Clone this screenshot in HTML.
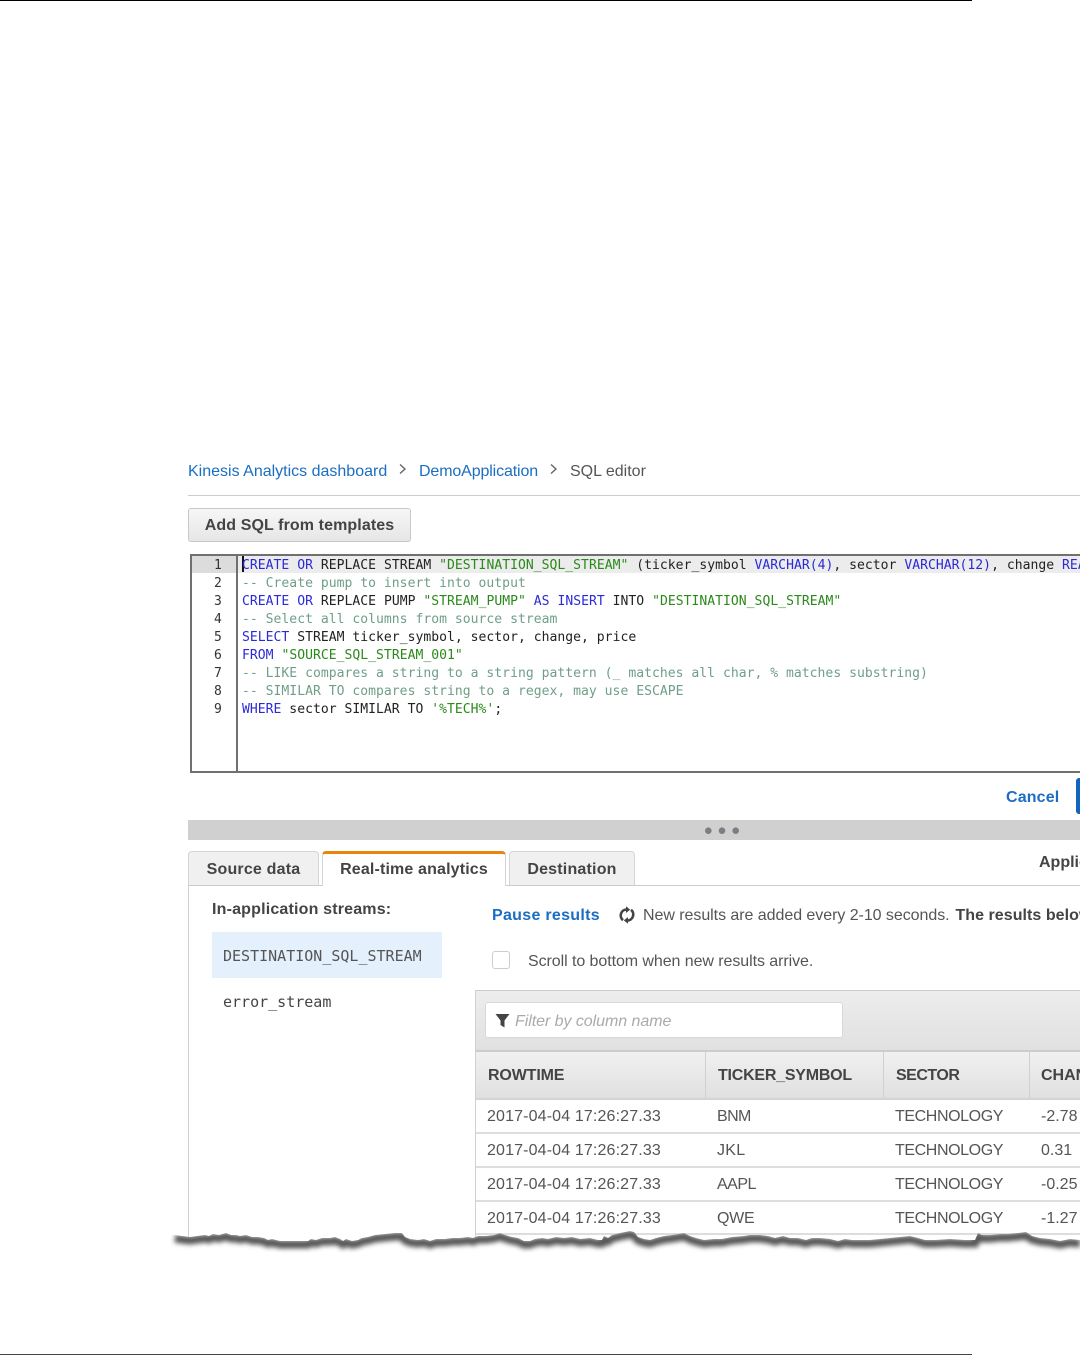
<!DOCTYPE html>
<html><head><meta charset="utf-8">
<style>
html,body{margin:0;padding:0;background:#fff;width:1080px;height:1355px;overflow:hidden}
#p{position:relative;width:1080px;height:1355px;overflow:hidden;font-family:"Liberation Sans",Arial,sans-serif;color:#444;filter:blur(.3px)}
#p div{position:absolute;white-space:pre}
.l{color:#1b6ec2}
.code{font-family:"DejaVu Sans Mono",monospace;font-size:13.07px;letter-spacing:.02px;line-height:18px;color:#222;left:242px}
.n{font-family:"DejaVu Sans Mono",monospace;font-size:13px;line-height:18px;color:#333;left:214px}
.k{color:#2a2ad8}.s{color:#2a8a1a}
.t{font-size:16px;line-height:20px;color:#555}
.h{font-size:16px;font-weight:bold;line-height:20px;color:#444}
.b{font-weight:bold}
.d{letter-spacing:.14px}.g{letter-spacing:-.4px}
.tab{top:851px;height:34px;background:#f0f0f0;border:1px solid #d5d5d5;border-bottom:none;border-radius:4px 4px 0 0;box-sizing:border-box;font-weight:bold;font-size:16px;line-height:36px;text-align:center;color:#444;letter-spacing:.2px}
.rl{left:476px;width:604px;height:2px;background:#ddd}
.vs{top:1051px;width:1px;height:47px;background:#d0d0d0}
</style></head><body><div id="p">

<div style="left:0;top:0;width:972px;height:1px;background:#000"></div>
<div style="left:0;top:1354px;width:972px;height:1px;background:#444"></div>

<div class="l" style="left:188px;top:464px;font-size:16px;line-height:16px">Kinesis Analytics dashboard</div>
<svg style="position:absolute;left:398px;top:463px" width="10" height="12"><path d="M2 1.5 L7 6 L2 10.5" fill="none" stroke="#666" stroke-width="1.4"/></svg>
<div class="l" style="left:419px;top:464px;font-size:16px;line-height:16px;letter-spacing:-.13px">DemoApplication</div>
<svg style="position:absolute;left:549px;top:463px" width="10" height="12"><path d="M2 1.5 L7 6 L2 10.5" fill="none" stroke="#666" stroke-width="1.4"/></svg>
<div style="left:570px;top:464px;font-size:16px;line-height:16px;color:#555">SQL editor</div>
<div style="left:188px;top:495px;width:892px;height:1px;background:#ccc"></div>

<div style="left:188px;top:508px;width:223px;height:34px;box-sizing:border-box;border:1px solid #c8c8c8;border-radius:3px;background:linear-gradient(#f6f6f6,#e6e6e6);font-weight:bold;font-size:16px;line-height:34px;text-align:center;color:#444;letter-spacing:.1px">Add SQL from templates</div>

<!-- editor -->
<div style="left:190px;top:554px;width:900px;height:219px;box-sizing:border-box;border:2px solid #707070;background:#fff"></div>
<div style="left:192px;top:556px;width:888px;height:17px;background:#ececec"></div>
<div style="left:192px;top:556px;width:45px;height:17px;background:#dcdcdc"></div>
<div style="left:236px;top:556px;width:2px;height:216px;background:#707070"></div>
<div style="left:242px;top:556px;width:2px;height:16px;background:#111"></div>

<div class="n" style="top:557px">1</div><div class="n" style="top:575px">2</div><div class="n" style="top:593px">3</div><div class="n" style="top:611px">4</div><div class="n" style="top:629px">5</div><div class="n" style="top:647px">6</div><div class="n" style="top:665px">7</div><div class="n" style="top:683px">8</div><div class="n" style="top:701px">9</div>

<div class="code" style="top:557px"><span class="k">CREATE</span> <span class="k">OR</span> REPLACE STREAM <span class="s">"DESTINATION_SQL_STREAM"</span> (ticker_symbol <span class="k">VARCHAR(4)</span>, sector <span class="k">VARCHAR(12)</span>, change <span class="k">REAL</span></div>
<div class="code" style="top:575px;color:#6f9f88">-- Create pump to insert into output</div>
<div class="code" style="top:593px"><span class="k">CREATE</span> <span class="k">OR</span> REPLACE PUMP <span class="s">"STREAM_PUMP"</span> <span class="k">AS</span> <span class="k">INSERT</span> INTO <span class="s">"DESTINATION_SQL_STREAM"</span></div>
<div class="code" style="top:611px;color:#6f9f88">-- Select all columns from source stream</div>
<div class="code" style="top:629px"><span class="k">SELECT</span> STREAM ticker_symbol, sector, change, price</div>
<div class="code" style="top:647px"><span class="k">FROM</span> <span class="s">"SOURCE_SQL_STREAM_001"</span></div>
<div class="code" style="top:665px;color:#6f9f88">-- LIKE compares a string to a string pattern (_ matches all char, % matches substring)</div>
<div class="code" style="top:683px;color:#6f9f88">-- SIMILAR TO compares string to a regex, may use ESCAPE</div>
<div class="code" style="top:701px"><span class="k">WHERE</span> sector SIMILAR TO <span class="s">'%TECH%'</span>;</div>

<div class="l b" style="left:1006px;top:786px;font-size:16px;line-height:20px;letter-spacing:.15px;padding-top:2px">Cancel</div>
<div style="left:1076px;top:778px;width:20px;height:36px;background:#1166bb;border-radius:3px"></div>

<div style="left:188px;top:820px;width:892px;height:20px;background:#d0d0d0"></div>
<svg style="position:absolute;left:700px;top:824px" width="44" height="14"><circle cx="8.3" cy="6.7" r="3.3" fill="#7b7e82"/><circle cx="22" cy="6.7" r="3.3" fill="#7b7e82"/><circle cx="35.7" cy="6.7" r="3.3" fill="#7b7e82"/></svg>

<!-- tabs -->
<div style="left:188px;top:885px;width:892px;height:1px;background:#ccc"></div>
<div style="left:188px;top:885px;width:1px;height:360px;background:#d0d0d0"></div>
<div class="tab" style="left:188px;width:131px">Source data</div>
<div class="tab" style="left:322px;width:184px;height:35px;background:#fff;border-top:3px solid #e8860c;line-height:31px;color:#444;letter-spacing:.15px">Real-time analytics</div>
<div class="tab" style="left:509px;width:126px">Destination</div>
<div class="h" style="left:1039px;top:853px">Application</div>

<div class="h" style="left:212px;top:900px;letter-spacing:.18px">In-application streams:</div>
<div style="left:212px;top:932px;width:230px;height:46px;background:#e4f0fc"></div>
<div style="left:223px;top:946px;font-family:'DejaVu Sans Mono',monospace;font-size:15px;line-height:20px;color:#555">DESTINATION_SQL_STREAM</div>
<div style="left:223px;top:992px;font-family:'DejaVu Sans Mono',monospace;font-size:15px;line-height:20px;color:#444">error_stream</div>

<div class="l b" style="left:492px;top:907px;font-size:16px;line-height:18px;letter-spacing:.3px">Pause results</div>
<svg style="position:absolute;left:618px;top:906px" width="18" height="18" viewBox="0 0 18 18"><path d="M8.5 3.5 A6 6 0 0 0 5 14.2" fill="none" stroke="#444" stroke-width="2.6"/><path d="M9.5 14.5 A6 6 0 0 0 13 3.8" fill="none" stroke="#444" stroke-width="2.6"/><path d="M8 0.3 L12.2 3.6 L8 7 Z M10 11 L5.8 14.4 L10 17.7 Z" fill="#444"/></svg>
<div class="t" style="left:643px;top:906px;letter-spacing:-.05px">New results are added every 2-10 seconds.<span class="b" style="color:#444;letter-spacing:.05px"> &#8202;The results below</span></div>

<div style="left:492px;top:951px;width:18px;height:18px;box-sizing:border-box;border:1px solid #ccc;border-radius:3px;background:#fff"></div>
<div class="t" style="left:528px;top:952px;letter-spacing:-.07px">Scroll to bottom when new results arrive.</div>

<!-- table -->
<div style="left:475px;top:990px;width:605px;height:61px;box-sizing:border-box;border-top:1px solid #ccc;border-left:1px solid #ccc;background:linear-gradient(#ededed,#e0e0e0)"></div>
<div style="left:485px;top:1002px;width:358px;height:36px;box-sizing:border-box;border:1px solid #d8d8d8;border-radius:3px;background:#fff"></div>
<svg style="position:absolute;left:495px;top:1013px" width="16" height="16" viewBox="0 0 16 16"><path d="M0.5 1 H14.5 L9.5 7.5 V14.5 L5.5 12 V7.5 Z" fill="#444"/></svg>
<div style="left:515px;top:1012px;font-size:16px;line-height:20px;font-style:italic;color:#aaa;letter-spacing:-.05px">Filter by column name</div>
<div style="left:475px;top:1050px;width:605px;height:2px;background:#ccc"></div>
<div style="left:475px;top:1052px;width:605px;height:46px;background:linear-gradient(#f0f0f0,#e0e0e0)"></div>
<div style="left:475px;top:1098px;width:605px;height:2px;background:#d4d4d4"></div>
<div style="left:475px;top:990px;width:1px;height:260px;background:#d0d0d0"></div>
<div class="vs" style="left:705px"></div><div class="vs" style="left:883px"></div><div class="vs" style="left:1029px"></div>
<div class="h" style="left:488px;top:1066px;letter-spacing:-.14px">ROWTIME</div>
<div class="h" style="left:718px;top:1066px;letter-spacing:-.23px">TICKER_SYMBOL</div>
<div class="h" style="left:896px;top:1066px;letter-spacing:-.5px">SECTOR</div>
<div class="h" style="left:1041px;top:1066px">CHANGE</div>

<div class="rl" style="top:1132px"></div><div class="rl" style="top:1166px"></div><div class="rl" style="top:1200px"></div><div class="rl" style="top:1233px"></div>

<div class="t d" style="left:487px;top:1107px">2017-04-04 17:26:27.33</div><div class="t" style="left:717px;top:1107px;letter-spacing:-.6px">BNM</div><div class="t g" style="left:895px;top:1107px">TECHNOLOGY</div><div class="t" style="left:1041px;top:1107px">-2.78</div>
<div class="t d" style="left:487px;top:1141px">2017-04-04 17:26:27.33</div><div class="t" style="left:717px;top:1141px;letter-spacing:.3px">JKL</div><div class="t g" style="left:895px;top:1141px">TECHNOLOGY</div><div class="t" style="left:1041px;top:1141px">0.31</div>
<div class="t d" style="left:487px;top:1175px">2017-04-04 17:26:27.33</div><div class="t" style="left:717px;top:1175px;letter-spacing:-.5px">AAPL</div><div class="t g" style="left:895px;top:1175px">TECHNOLOGY</div><div class="t" style="left:1041px;top:1175px">-0.25</div>
<div class="t d" style="left:487px;top:1209px">2017-04-04 17:26:27.33</div><div class="t" style="left:717px;top:1209px;letter-spacing:-.3px">QWE</div><div class="t g" style="left:895px;top:1209px">TECHNOLOGY</div><div class="t" style="left:1041px;top:1209px">-1.27</div>

<!-- torn edge -->
<svg style="position:absolute;left:0;top:1220px" width="1080" height="60" viewBox="0 1220 1080 60">
<defs>
<filter id="bl" x="-5%" y="-100%" width="110%" height="300%"><feGaussianBlur stdDeviation="2.4"/></filter>
<clipPath id="below"><path d="M0 1280 L0 1236 L175 1235 182 1236 190 1237 197 1236 205 1235 209 1236 213 1234 219 1235 226 1233 231 1235 236 1235 240 1236 246 1235 252 1237 258 1237 264 1238 268 1240 272 1239 280 1241 300 1241 308 1241 311 1239 316 1240 322 1238 330 1238 335 1237 340 1239 343 1241 346 1239 352 1241 358 1240 362 1238 368 1237 375 1235 385 1234 395 1233 402 1233 405 1237 410 1239 418 1240 424 1239 430 1241 436 1239 445 1239 452 1238 460 1238 468 1237 473 1238 478 1236 486 1236 494 1235 500 1233 505 1235 512 1237 518 1238 524 1241 530 1241 535 1239 542 1238 548 1239 556 1237 564 1238 572 1237 580 1239 590 1238 598 1240 602 1240 604 1236 608 1238 612 1235 620 1233 630 1231 634 1232 638 1237 644 1239 650 1240 656 1238 664 1236 672 1235 684 1233 690 1236 696 1238 704 1240 714 1239 722 1239 732 1237 744 1236 750 1235 760 1235 768 1236 775 1238 783 1236 790 1238 798 1238 806 1240 812 1238 820 1238 830 1239 838 1241 845 1239 852 1240 860 1240 870 1240 880 1239 890 1238 900 1237 910 1236 918 1238 925 1240 935 1240 950 1239 965 1240 975 1240 978 1233 982 1235 990 1235 1000 1234 1008 1234 1018 1233 1026 1232 1032 1236 1040 1238 1050 1239 1060 1241 1070 1239 1080 1240 L1080 1280 Z"/></clipPath>
</defs>
<path d="M0 1280 L0 1236 L175 1235 182 1236 190 1237 197 1236 205 1235 209 1236 213 1234 219 1235 226 1233 231 1235 236 1235 240 1236 246 1235 252 1237 258 1237 264 1238 268 1240 272 1239 280 1241 300 1241 308 1241 311 1239 316 1240 322 1238 330 1238 335 1237 340 1239 343 1241 346 1239 352 1241 358 1240 362 1238 368 1237 375 1235 385 1234 395 1233 402 1233 405 1237 410 1239 418 1240 424 1239 430 1241 436 1239 445 1239 452 1238 460 1238 468 1237 473 1238 478 1236 486 1236 494 1235 500 1233 505 1235 512 1237 518 1238 524 1241 530 1241 535 1239 542 1238 548 1239 556 1237 564 1238 572 1237 580 1239 590 1238 598 1240 602 1240 604 1236 608 1238 612 1235 620 1233 630 1231 634 1232 638 1237 644 1239 650 1240 656 1238 664 1236 672 1235 684 1233 690 1236 696 1238 704 1240 714 1239 722 1239 732 1237 744 1236 750 1235 760 1235 768 1236 775 1238 783 1236 790 1238 798 1238 806 1240 812 1238 820 1238 830 1239 838 1241 845 1239 852 1240 860 1240 870 1240 880 1239 890 1238 900 1237 910 1236 918 1238 925 1240 935 1240 950 1239 965 1240 975 1240 978 1233 982 1235 990 1235 1000 1234 1008 1234 1018 1233 1026 1232 1032 1236 1040 1238 1050 1239 1060 1241 1070 1239 1080 1240 L1080 1280 Z" fill="#fff"/>
<g clip-path="url(#below)">
<path d="M175 1235 182 1236 190 1237 197 1236 205 1235 209 1236 213 1234 219 1235 226 1233 231 1235 236 1235 240 1236 246 1235 252 1237 258 1237 264 1238 268 1240 272 1239 280 1241 300 1241 308 1241 311 1239 316 1240 322 1238 330 1238 335 1237 340 1239 343 1241 346 1239 352 1241 358 1240 362 1238 368 1237 375 1235 385 1234 395 1233 402 1233 405 1237 410 1239 418 1240 424 1239 430 1241 436 1239 445 1239 452 1238 460 1238 468 1237 473 1238 478 1236 486 1236 494 1235 500 1233 505 1235 512 1237 518 1238 524 1241 530 1241 535 1239 542 1238 548 1239 556 1237 564 1238 572 1237 580 1239 590 1238 598 1240 602 1240 604 1236 608 1238 612 1235 620 1233 630 1231 634 1232 638 1237 644 1239 650 1240 656 1238 664 1236 672 1235 684 1233 690 1236 696 1238 704 1240 714 1239 722 1239 732 1237 744 1236 750 1235 760 1235 768 1236 775 1238 783 1236 790 1238 798 1238 806 1240 812 1238 820 1238 830 1239 838 1241 845 1239 852 1240 860 1240 870 1240 880 1239 890 1238 900 1237 910 1236 918 1238 925 1240 935 1240 950 1239 965 1240 975 1240 978 1233 982 1235 990 1235 1000 1234 1008 1234 1018 1233 1026 1232 1032 1236 1040 1238 1050 1239 1060 1241 1070 1239 1080 1240" transform="translate(0,3.5)" fill="none" stroke="#555" stroke-width="8" filter="url(#bl)"/>
</g>
</svg>
</div></body></html>
